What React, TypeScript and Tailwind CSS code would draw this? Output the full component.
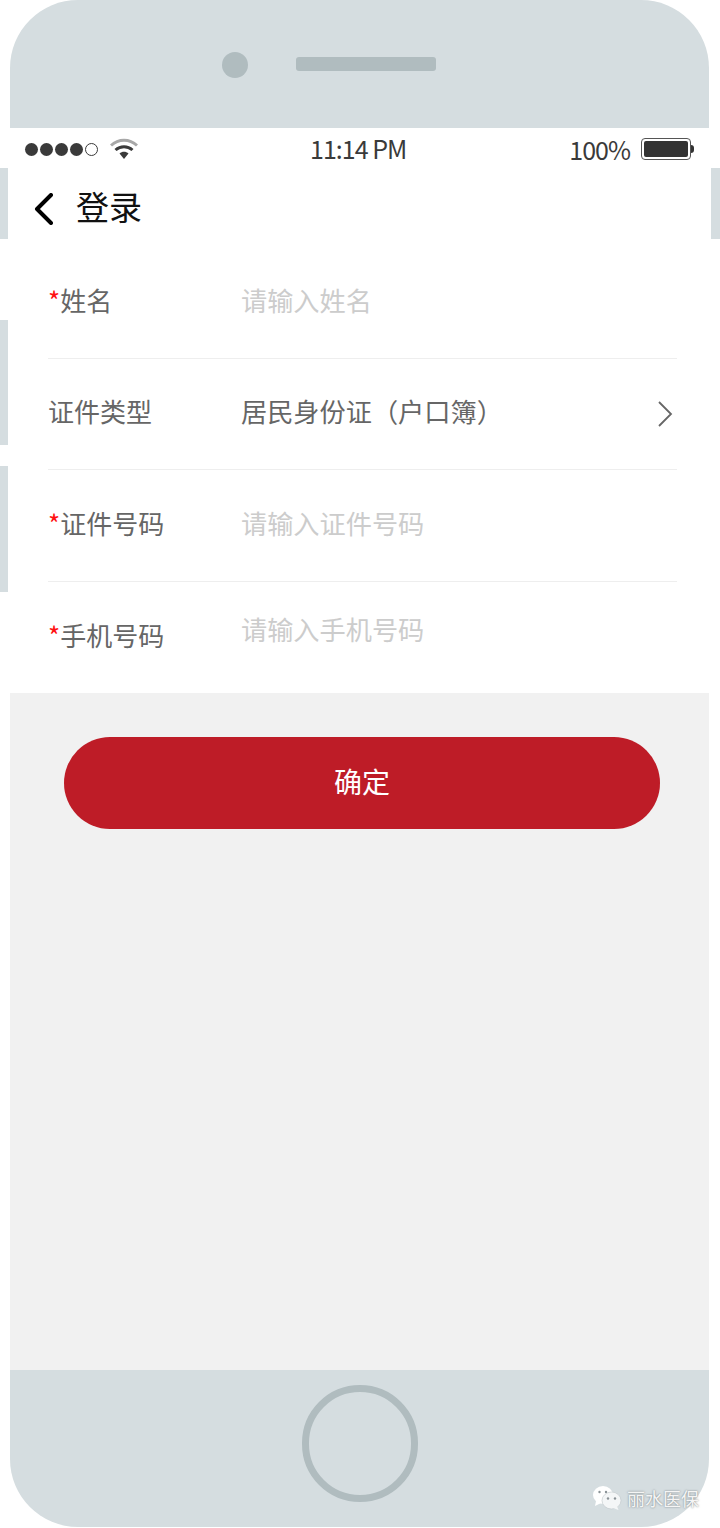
import React from 'react';

const cjk = 'font-["Noto_Sans_CJK_SC","Noto_Sans",sans-serif]';

const Field = ({
  label,
  value,
  required,
  placeholder,
  arrow,
  last,
  valueClass,
}: {
  label: string;
  value: string;
  required?: boolean;
  placeholder?: boolean;
  arrow?: boolean;
  last?: boolean;
  valueClass?: string;
}) => (
  <div className={`flex h-[111.5px] items-center pb-[5px] ${last ? '' : 'border-b border-[#eeeeee]'}`}>
    <div className="w-[193px] text-[26px] leading-none text-[#666666]">
      {required && <span className="text-[#ff1010]">*</span>}
      {label}
    </div>
    <div className={`flex-1 text-[26.2px] leading-none ${placeholder ? 'text-[#cccccc]' : 'text-[#666666]'} ${valueClass ?? ''}`}>
      {value}
    </div>
    {arrow && (
      <svg width="16" height="28" viewBox="0 0 16 28" fill="none" className="mr-[4px] mt-[5px]">
        <path d="M2 2 L14 14 L2 26" stroke="#666666" strokeWidth="1.8" />
      </svg>
    )}
  </div>
);

const StatusBar = () => (
  <div className="flex h-[40px] items-center justify-between pl-[15px] pr-[15px]">
    <div className="flex items-center pt-[2px]">
      <div className="flex items-center gap-[2px]">
        {[0, 1, 2, 3].map((i) => (
          <span key={i} className="h-[13px] w-[13px] rounded-full bg-[#3a3a3a]" />
        ))}
        <span className="h-[13px] w-[13px] rounded-full border border-[#3a3a3a]" />
      </div>
      <svg width="28" height="22" viewBox="0 0 28 22" className="ml-[12px]">
        <path d="M1 7.5 C8.5 0.5 19.5 0.5 27 7.5" stroke="#a8a8a8" strokeWidth="3" fill="none" />
        <path d="M5.5 12 C10.5 7.5 17.5 7.5 22.5 12" stroke="#3a3a3a" strokeWidth="3" fill="none" />
        <path d="M9.5 15.5 C12 13.2 16 13.2 18.5 15.5 L14 21 Z" fill="#3a3a3a" />
      </svg>
    </div>
    <div className="ml-[9px] text-[25px] leading-none tracking-[-1px] text-[#3a3a3a]">11:14 PM</div>
    <div className="flex items-center pt-[2px]">
      <span className="mt-[1px] text-[25px] leading-none tracking-[-1px] text-[#3a3a3a]">100%</span>
      <div className="ml-[11px] flex h-[22px] w-[50px] rounded-[4px] border border-[#555555] p-[2px]">
        <div className="flex-1 rounded-[2px] bg-[#333333]" />
      </div>
      <span className="h-[8px] w-[3px] rounded-r-full bg-[#333333]" />
    </div>
  </div>
);

const WeChatMark = () => (
  <svg width="30" height="26" viewBox="0 0 30 26">
    <ellipse cx="11" cy="10" rx="10" ry="9" fill="#ffffff" />
    <path d="M4 16 L3 21 L9 18 Z" fill="#ffffff" />
    <circle cx="7.5" cy="7" r="1.2" fill="#8a9296" />
    <circle cx="14" cy="7" r="1.2" fill="#8a9296" />
    <ellipse cx="19.5" cy="15.5" rx="9.5" ry="8.5" fill="#f4f6f7" stroke="#c0c6c9" strokeWidth="0.6" />
    <path d="M25 21 L26.5 25 L21 23 Z" fill="#f4f6f7" />
    <circle cx="16" cy="13.5" r="1.2" fill="#8a9296" />
    <circle cx="23" cy="13.5" r="1.2" fill="#8a9296" />
  </svg>
);

const App: React.FC = () => {
  return (
    <div className={`relative flex h-[1528px] w-[720px] overflow-hidden bg-white ${cjk}`}>
      {/* Left side buttons */}
      <div className="flex w-[10px] flex-col pt-[168px]">
        <div className="h-[71px] w-[8px] bg-[#d5dde0]" />
        <div className="mt-[81px] h-[125px] w-[8px] bg-[#d5dde0]" />
        <div className="mt-[21px] h-[126px] w-[8px] bg-[#d5dde0]" />
      </div>

      {/* Phone body */}
      <div className="flex h-[1527px] w-[699px] flex-col overflow-hidden rounded-[68px] bg-[#d5dde0]">
        <div className="flex h-[128px] shrink-0 items-start pl-[212px] pt-[52px]">
          <div className="h-[26px] w-[26px] rounded-full bg-[#b0bcbf]" />
          <div className="ml-[48px] mt-[5px] h-[14px] w-[140px] rounded-[3px] bg-[#b0bcbf]" />
        </div>

        <div className="bg-white">
          <StatusBar />
          <div className="flex h-[72px] items-center pl-[24px] pt-[9px]">
            <svg width="20" height="32" viewBox="0 0 20 32" fill="none">
              <path d="M17 2 L3 16 L17 30" stroke="#000000" strokeWidth="4" strokeLinecap="round" strokeLinejoin="round" />
            </svg>
            <span className="ml-[22px] -translate-y-[2px] text-[33px] leading-none text-[#111111]">登录</span>
          </div>
          <div className="pl-[38px] pr-[32px] pt-[7px]">
            <Field label="姓名" value="请输入姓名" required placeholder />
            <Field label="证件类型" value="居民身份证（户口簿）" arrow />
            <Field label="证件号码" value="请输入证件号码" required placeholder />
            <Field label="手机号码" value="请输入手机号码" required placeholder last valueClass="-translate-y-[6px]" />
          </div>
        </div>

        <div className="flex flex-1 flex-col bg-[#f1f1f1] px-[54px] pt-[44px]">
          <button className="flex h-[92px] w-[596px] items-center justify-center rounded-full bg-[#be1c27] pb-[5px] text-[28px] text-white">
            确定
          </button>
        </div>

        <div className="flex h-[157px] shrink-0 justify-center pt-[15px]">
          <div className="h-[117px] w-[116px] rounded-full border-[7px] border-[#b0bcbf]" />
        </div>
      </div>

      {/* Right side button */}
      <div className="flex flex-1 justify-end pt-[168px]">
        <div className="h-[71px] w-[9px] bg-[#d5dde0]" />
      </div>

      {/* Watermark */}
      <div className="absolute bottom-[17px] left-[592px] flex items-center gap-[5px]">
        <WeChatMark />
        <span className="text-[18px] leading-none text-[#f5f5f5] [text-shadow:0_0_2px_#6b7478]">丽水医保</span>
      </div>
    </div>
  );
};

export default App;
